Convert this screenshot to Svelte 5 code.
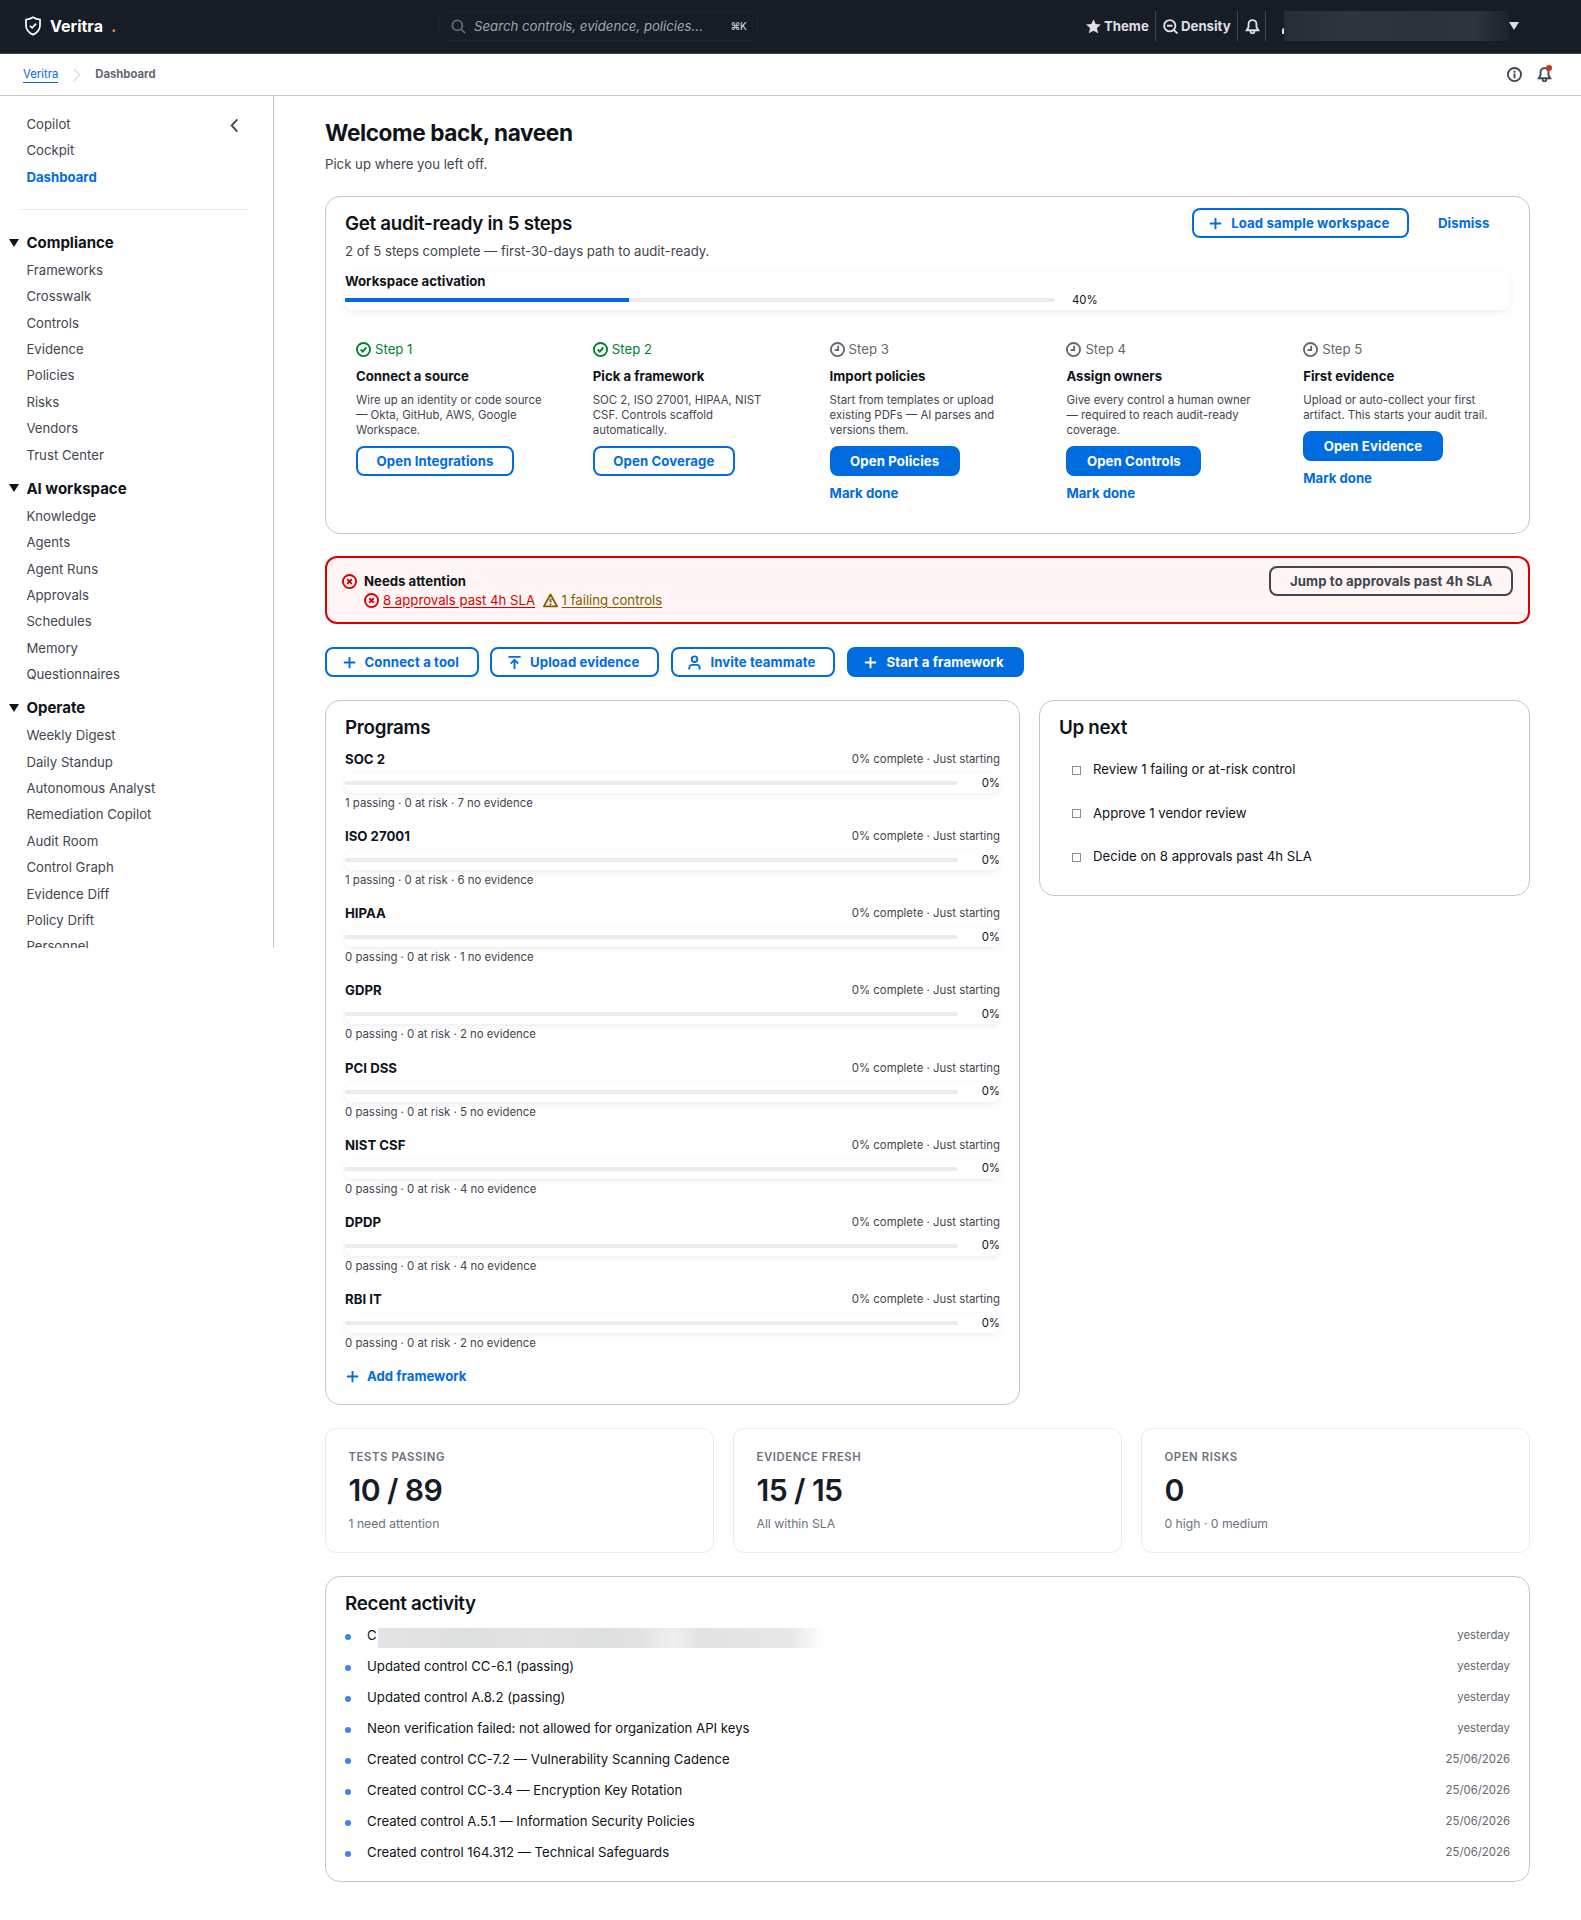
<script lang="ts">
	type Step = {
		title: string;
		text: string;
		action: string;
		done: boolean;
	};

	const topLinks = ['Copilot', 'Cockpit', 'Dashboard'];

	const sections = [
		{
			title: 'Compliance',
			items: ['Frameworks', 'Crosswalk', 'Controls', 'Evidence', 'Policies', 'Risks', 'Vendors', 'Trust Center']
		},
		{
			title: 'AI workspace',
			items: ['Knowledge', 'Agents', 'Agent Runs', 'Approvals', 'Schedules', 'Memory', 'Questionnaires']
		},
		{
			title: 'Operate',
			items: [
				'Weekly Digest',
				'Daily Standup',
				'Autonomous Analyst',
				'Remediation Copilot',
				'Audit Room',
				'Control Graph',
				'Evidence Diff',
				'Policy Drift',
				'Personnel'
			]
		}
	];

	const steps: Step[] = [
		{
			title: 'Connect a source',
			text: 'Wire up an identity or code source — Okta, GitHub, AWS, Google Workspace.',
			action: 'Open Integrations',
			done: true
		},
		{
			title: 'Pick a framework',
			text: 'SOC 2, ISO 27001, HIPAA, NIST CSF. Controls scaffold automatically.',
			action: 'Open Coverage',
			done: true
		},
		{
			title: 'Import policies',
			text: 'Start from templates or upload existing PDFs — AI parses and versions them.',
			action: 'Open Policies',
			done: false
		},
		{
			title: 'Assign owners',
			text: 'Give every control a human owner — required to reach audit-ready coverage.',
			action: 'Open Controls',
			done: false
		},
		{
			title: 'First evidence',
			text: 'Upload or auto-collect your first artifact. This starts your audit trail.',
			action: 'Open Evidence',
			done: false
		}
	];

	const programs = [
		{ name: 'SOC 2', passing: 1, missing: 7 },
		{ name: 'ISO 27001', passing: 1, missing: 6 },
		{ name: 'HIPAA', passing: 0, missing: 1 },
		{ name: 'GDPR', passing: 0, missing: 2 },
		{ name: 'PCI DSS', passing: 0, missing: 5 },
		{ name: 'NIST CSF', passing: 0, missing: 4 },
		{ name: 'DPDP', passing: 0, missing: 4 },
		{ name: 'RBI IT', passing: 0, missing: 2 }
	];

	const upNext = ['Review 1 failing or at-risk control', 'Approve 1 vendor review', 'Decide on 8 approvals past 4h SLA'];

	const stats = [
		{ label: 'Tests passing', value: '10 / 89', note: '1 need attention' },
		{ label: 'Evidence fresh', value: '15 / 15', note: 'All within SLA' },
		{ label: 'Open risks', value: '0', note: '0 high · 0 medium' }
	];

	const activity = [
		{ text: 'C', when: 'yesterday', redacted: true },
		{ text: 'Updated control CC-6.1 (passing)', when: 'yesterday' },
		{ text: 'Updated control A.8.2 (passing)', when: 'yesterday' },
		{ text: 'Neon verification failed: not allowed for organization API keys', when: 'yesterday' },
		{ text: 'Created control CC-7.2 — Vulnerability Scanning Cadence', when: '25/06/2026' },
		{ text: 'Created control CC-3.4 — Encryption Key Rotation', when: '25/06/2026' },
		{ text: 'Created control A.5.1 — Information Security Policies', when: '25/06/2026' },
		{ text: 'Created control 164.312 — Technical Safeguards', when: '25/06/2026' }
	];

	const activation = 40;
</script>

{#snippet icon(name: string)}
	<svg class="icon" viewBox="0 0 16 16" aria-hidden="true">
		{#if name === 'plus'}
			<path d="M8 2v12M2 8h12" />
		{:else if name === 'upload'}
			<path d="M1.5 2h13M8 15V6M4 9.2 8 5.2l4 4" />
		{:else if name === 'user'}
			<circle cx="8" cy="4.5" r="3" />
			<path d="M2.5 15.5v-2a3 3 0 0 1 3-3h5a3 3 0 0 1 3 3v2" />
		{:else if name === 'check'}
			<circle cx="8" cy="8" r="7" />
			<path d="m5 8 2.3 2.3L11 5.7" />
		{:else if name === 'pending'}
			<circle cx="8" cy="8" r="7" />
			<path d="M8.7 4v4.5H5" />
		{:else if name === 'error'}
			<circle cx="8" cy="8" r="7" />
			<path d="m5.6 5.6 4.8 4.8m0-4.8-4.8 4.8" />
		{:else if name === 'warning'}
			<path stroke-linejoin="round" d="M8 1.5 15 14.3H1zM8 6v4.2M8 11.2v1.6" />
		{:else if name === 'info'}
			<circle cx="8" cy="8" r="7" />
			<path d="M8 7v5M8 4v2" />
		{:else if name === 'bell'}
			<path d="M8 1.2a4.2 4.2 0 0 0-4.2 4.2v3.1L1.8 12h12.4l-2-3.5V5.4A4.2 4.2 0 0 0 8 1.2zM6 13v.3a2 2 0 0 0 4 0V13" />
		{:else if name === 'search'}
			<circle cx="6.8" cy="6.8" r="5.3" />
			<path d="m10.8 10.8 4.2 4.2" />
		{:else if name === 'zoom-out'}
			<circle cx="7.2" cy="7.2" r="6" />
			<path d="m11.5 11.5 4 4M4.3 7.2h5.8" />
		{:else if name === 'left'}
			<path d="M11 1.5 5 8l6 6.5" />
		{:else if name === 'star'}
			<path class="solid" d="m8 .2 2.3 5 5.6.6-4.200 3.700 1.200 5.700L8 12.400 3.100 15.200l1.200-5.700L.1 5.800l5.600-.6z" />
		{/if}
	</svg>
{/snippet}

<div class="page">
	<header class="topbar">
		<div class="brand">
			<svg class="shield" viewBox="0 0 18 20" aria-hidden="true">
				<path d="M9 1.3c2.4 1.5 4.7 2.1 7 2.2v5.8c0 4.4-2.7 7.5-7 9.3-4.3-1.8-7-4.9-7-9.3V3.5c2.3-.1 4.6-.7 7-2.2z" />
				<path d="m6 9.8 2.2 2.1 3.9-4.3" />
			</svg>
			<span class="brand-name">Veritra</span><span class="brand-dot">.</span>
		</div>
		<div class="search">
			{@render icon('search')}
			<span class="placeholder">Search controls, evidence, policies...</span>
			<kbd>⌘K</kbd>
		</div>
		<div class="utilities">
			<span class="util theme">{@render icon('star')}Theme</span>
			<span class="util density">{@render icon('zoom-out')}Density</span>
			<span class="util alerts">{@render icon('bell')}</span>
			<span class="util account"><i class="avatar-edge"></i><span class="account-mask"></span></span>
			<span class="caret light"></span>
		</div>
	</header>

	<div class="crumbbar">
		<a class="crumb-link" href="#home">Veritra</a>
		<svg class="crumb-sep" viewBox="0 0 8 14" aria-hidden="true"><path d="m1 1 5.5 6L1 13" /></svg>
		<span class="crumb-current">Dashboard</span>
		<span class="crumb-actions">
			{@render icon('info')}
			<span class="bell-wrap">{@render icon('bell')}<i class="badge"></i></span>
		</span>
	</div>

	<div class="body">
		<nav class="sidebar">
			<div class="top-links">
				<span class="collapse">{@render icon('left')}</span>
				{#each topLinks as link}
					<a class="nav-link" class:active={link === 'Dashboard'} href="#nav">{link}</a>
				{/each}
			</div>
			{#each sections as section}
				<div class="section">
					<div class="section-title"><span class="caret"></span>{section.title}</div>
					{#each section.items as item}
						<a class="nav-link" href="#nav">{item}</a>
					{/each}
				</div>
			{/each}
		</nav>

		<main>
			<h1>Welcome back, naveen</h1>
			<p class="lead">Pick up where you left off.</p>

			<section class="card onboarding">
				<div class="card-head">
					<h2>Get audit-ready in 5 steps</h2>
					<div class="head-actions">
						<button class="btn with-icon">{@render icon('plus')}Load sample workspace</button>
						<button class="btn link">Dismiss</button>
					</div>
				</div>
				<p class="card-desc">2 of 5 steps complete — first-30-days path to audit-ready.</p>
				<div class="activation">
					<strong>Workspace activation</strong>
					<div class="meter-row">
						<div class="meter"><div class="fill" style="width: {activation}%"></div></div>
						<span>{activation}%</span>
					</div>
				</div>
				<div class="steps">
					{#each steps as step, i}
						<div class="step">
							<div class="status" class:done={step.done}>
								{@render icon(step.done ? 'check' : 'pending')}Step {i + 1}
							</div>
							<h3>{step.title}</h3>
							<p>{step.text}</p>
							<button class="btn" class:primary={!step.done}>{step.action}</button>
							{#if !step.done}
								<a class="mark" href="#done">Mark done</a>
							{/if}
						</div>
					{/each}
				</div>
			</section>

			<section class="alert">
				<span class="alert-icon">{@render icon('error')}</span>
				<div class="alert-body">
					<strong>Needs attention</strong>
					<div class="alert-links">
						<span class="issue">{@render icon('error')}<a href="#approvals">8 approvals past 4h SLA</a></span>
						<span class="issue warn">{@render icon('warning')}<a href="#controls">1 failing controls</a></span>
					</div>
				</div>
				<button class="btn neutral">Jump to approvals past 4h SLA</button>
			</section>

			<div class="quick-actions">
				<button class="btn with-icon">{@render icon('plus')}Connect a tool</button>
				<button class="btn with-icon">{@render icon('upload')}Upload evidence</button>
				<button class="btn with-icon">{@render icon('user')}Invite teammate</button>
				<button class="btn with-icon primary">{@render icon('plus')}Start a framework</button>
			</div>

			<div class="columns">
				<section class="card programs">
					<h2>Programs</h2>
					{#each programs as program}
						<div class="program">
							<div class="program-head">
								<strong>{program.name}</strong>
								<span>0% complete · Just starting</span>
							</div>
							<div class="program-meter">
								<div class="meter"></div>
								<span>0%</span>
							</div>
							<div class="program-note">{program.passing} passing · 0 at risk · {program.missing} no evidence</div>
						</div>
					{/each}
					<a class="add" href="#add">{@render icon('plus')}Add framework</a>
				</section>

				<section class="card up-next">
					<h2>Up next</h2>
					<ul>
						{#each upNext as task}
							<li><i class="box"></i>{task}</li>
						{/each}
					</ul>
				</section>
			</div>

			<div class="stats">
				{#each stats as stat}
					<div class="stat">
						<div class="stat-label">{stat.label}</div>
						<div class="stat-value">{stat.value}</div>
						<div class="stat-note">{stat.note}</div>
					</div>
				{/each}
			</div>

			<section class="card activity">
				<h2>Recent activity</h2>
				<ul>
					{#each activity as entry}
						<li>
							<i class="dot"></i>
							<span>{entry.text}</span>
							{#if entry.redacted}<i class="redacted"></i>{/if}
							<time>{entry.when}</time>
						</li>
					{/each}
				</ul>
			</section>
		</main>
	</div>
</div>

<style>
	:global(body) {
		background: #ffffff;
	}

	.page {
		height: 1920px;
		overflow: hidden;
		font-family: Inter, 'Liberation Sans', sans-serif;
		font-size: 13.2px;
		line-height: 19px;
		color: #0f141a;
	}

	.page *,
	.page {
		box-sizing: border-box;
	}

	h1,
	h2,
	h3,
	p,
	ul {
		margin: 0;
		padding: 0;
	}

	ul {
		list-style: none;
	}

	a {
		color: inherit;
		text-decoration: none;
	}

	.icon {
		width: 15px;
		height: 15px;
		flex: none;
		fill: none;
		stroke: currentColor;
		stroke-width: 2;
	}

	.icon .solid {
		fill: currentColor;
		stroke: none;
	}

	/* Top navigation */
	.topbar {
		display: flex;
		align-items: center;
		height: 54px;
		padding: 0 62px 1px 24px;
		background: #161d26;
		border-bottom: 1px solid #424650;
		color: #dedee3;
	}

	.brand {
		display: flex;
		align-items: center;
		width: 415px;
		color: #ffffff;
		font-size: 16px;
		font-weight: 700;
	}

	.shield {
		width: 18px;
		height: 20px;
		margin-right: 8px;
		fill: none;
		stroke: #ffffff;
		stroke-width: 1.7;
	}

	.brand-dot {
		margin-left: 8px;
		color: #ff7a1a;
	}

	.search {
		display: flex;
		align-items: center;
		width: 319px;
		height: 30px;
		padding: 0 11px;
		border: 1px solid #1c232d;
		border-radius: 7px;
		color: #a4a4ad;
	}

	.search .icon {
		color: #656871;
	}

	.placeholder {
		margin-left: 8px;
		font-style: italic;
		white-space: nowrap;
	}

	kbd {
		margin-left: auto;
		font: inherit;
		font-size: 10px;
		letter-spacing: -0.6px;
		color: #dedee3;
	}

	.utilities {
		display: flex;
		align-items: center;
		margin-left: auto;
		font-weight: 700;
	}

	.util {
		display: flex;
		align-items: center;
		height: 30px;
		gap: 3px;
		border-right: 1px solid #424650;
	}

	.theme {
		width: 70px;
	}

	.density {
		width: 82px;
		padding-left: 7px;
	}

	.alerts {
		width: 28px;
		padding-left: 7px;
	}

	.account {
		width: 243px;
		gap: 0;
		padding-left: 16px;
		border: none;
	}

	.avatar-edge {
		width: 2px;
		height: 6px;
		margin-top: 10px;
		border-left: 2px solid #dedee3;
		border-top-left-radius: 3px;
	}

	.account-mask {
		width: 225px;
		height: 30px;
		background: linear-gradient(90deg, #262d36, #2f343e 30%, #2c323c 60%, #2e333e 85%, #1c232c);
	}

	.caret {
		border: 5px solid transparent;
		border-top: 8px solid #0f141a;
		border-bottom: none;
	}

	.caret.light {
		border-top-color: #dedee3;
	}

	/* Breadcrumbs */
	.crumbbar {
		display: flex;
		align-items: center;
		height: 42px;
		padding: 0 29px 0 23px;
		border-bottom: 1px solid #c6c6cd;
		font-size: 11.3px;
	}

	.crumb-link {
		color: #006ce0;
		line-height: 15px;
		border-bottom: 1px solid #006ce0;
	}

	.crumb-sep {
		width: 8px;
		height: 14px;
		margin: 0 14px 0 15px;
		fill: none;
		stroke: #dedee3;
		stroke-width: 1.5;
	}

	.crumb-current {
		color: #656871;
		font-weight: 700;
	}

	.crumb-actions {
		display: flex;
		gap: 15px;
		margin-left: auto;
		color: #424650;
	}

	.bell-wrap {
		position: relative;
		display: flex;
	}

	.badge {
		position: absolute;
		top: -2px;
		right: 0;
		width: 6px;
		height: 6px;
		border-radius: 50%;
		background: #d13212;
	}

	.body {
		display: flex;
		align-items: flex-start;
	}

	/* Side navigation */
	.sidebar {
		width: 274px;
		height: 852px;
		overflow: hidden;
		border-right: 1px solid #c6c6cd;
		color: #424650;
		flex: none;
	}

	.top-links {
		position: relative;
		height: 114px;
		margin: 0 25px 0 19px;
		padding: 15px 0 0 7.4px;
		border-bottom: 1px solid #ebebf0;
	}

	.top-links .nav-link {
		padding-left: 0;
	}

	.collapse {
		position: absolute;
		top: 22px;
		right: 6px;
	}

	.nav-link {
		display: block;
		height: 26.36px;
		padding-left: 26.4px;
		line-height: 26.36px;
	}

	.nav-link.active {
		color: #006ce0;
		font-weight: 700;
	}

	.section {
		padding-top: 6px;
	}

	.top-links + .section {
		padding-top: 18px;
	}

	.section-title {
		display: flex;
		align-items: center;
		height: 29px;
		gap: 7.4px;
		padding-left: 9px;
		color: #0f141a;
		font-size: 15px;
		font-weight: 700;
	}

	/* Main content */
	main {
		width: 1205px;
		margin-left: 51px;
	}

	h1 {
		margin-top: 22px;
		font-size: 22.6px;
		line-height: 30px;
		letter-spacing: -0.4px;
	}

	.lead {
		margin-top: 7px;
		color: #424650;
	}

	h2 {
		padding-top: 1px;
		font-size: 18.8px;
		line-height: 22px;
		font-weight: 600;
		letter-spacing: -0.3px;
	}

	.card {
		border: 1px solid #c6c6cd;
		border-radius: 15px;
		padding: 15px 19px;
	}

	.btn {
		display: inline-flex;
		align-items: center;
		justify-content: center;
		height: 30px;
		padding: 0 18.5px;
		border: 2px solid #006ce0;
		border-radius: 8px;
		background: #ffffff;
		color: #006ce0;
		font: 700 13.2px/19px Inter, sans-serif;
		letter-spacing: 0.1px;
		white-space: nowrap;
		gap: 8px;
	}

	.btn.with-icon {
		padding: 0 18px 0 14.5px;
	}

	.btn.primary {
		background: #006ce0;
		color: #ffffff;
	}

	.btn.neutral {
		border-color: #424650;
		background: transparent;
		color: #424650;
	}

	.btn.link {
		border-color: transparent;
		background: none;
	}

	.onboarding {
		height: 338px;
		margin-top: 22px;
		padding-top: 11px;
	}

	.card-head {
		display: flex;
		align-items: center;
		justify-content: space-between;
		height: 30px;
	}

	.head-actions {
		display: flex;
		gap: 8px;
	}

	.card-desc {
		margin-top: 4px;
		color: #424650;
		line-height: 19px;
	}

	.activation {
		height: 39px;
		margin-top: 10px;
		border-radius: 8px;
		box-shadow: 0 2px 6px rgba(0, 7, 22, 0.07);
	}

	.activation strong {
		display: block;
		height: 19px;
		line-height: 21px;
	}

	.meter-row {
		display: flex;
		align-items: center;
		height: 20px;
		gap: 17px;
		font-size: 11.4px;
	}

	.meter-row span {
		margin-top: 1px;
	}

	.meter {
		height: 4px;
		background: #ebebf0;
		border-radius: 2px;
	}

	.meter-row .meter {
		width: 710px;
	}

	.fill {
		height: 4px;
		background: #006ce0;
	}

	.steps {
		display: grid;
		grid-template-columns: repeat(5, 1fr);
		margin: 30px -19px 0 0;
	}

	.step {
		padding: 0 36px 0 11px;
	}

	.status {
		display: flex;
		align-items: center;
		height: 19px;
		gap: 4px;
		color: #656871;
	}

	.status.done {
		color: #00802f;
	}

	.step h3 {
		margin-top: 8px;
		font-size: 13.2px;
		line-height: 19px;
	}

	.step p {
		margin: 7px 0 8px;
		color: #424650;
		font-size: 11.4px;
		line-height: 15.1px;
	}

	.mark {
		display: block;
		margin-top: 8px;
		color: #006ce0;
		font-weight: 700;
	}

	/* Alert */
	.alert {
		display: flex;
		height: 68px;
		margin-top: 22px;
		padding: 8px 15px;
		border: 2px solid #db0000;
		border-radius: 12px;
		background: #fff5f5;
	}

	.alert-icon {
		display: flex;
		margin: 8px 7px 0 0;
		color: #db0000;
		height: 15px;
	}

	.alert-body {
		flex: 1;
		padding-top: 6px;
	}

	.alert-links {
		display: flex;
		gap: 7.5px;
	}

	.issue {
		display: flex;
		align-items: center;
		gap: 4px;
		color: #db0000;
	}

	.issue.warn {
		color: #855900;
	}

	.issue a {
		text-decoration: underline;
		text-underline-offset: 2px;
	}

	.quick-actions {
		display: flex;
		gap: 11.5px;
		margin-top: 23px;
	}

	/* Programs and tasks */
	.columns {
		display: flex;
		align-items: flex-start;
		gap: 19px;
		margin-top: 23px;
	}

	.programs {
		width: 695px;
		height: 705px;
	}

	.programs h2 {
		margin-bottom: -1px;
	}

	.program {
		height: 77.17px;
		padding-top: 12px;
		font-size: 11.4px;
	}

	.program-head {
		display: flex;
		align-items: center;
		justify-content: space-between;
		height: 19px;
		color: #424650;
	}

	.program-head strong {
		color: #0f141a;
		font-size: 13.2px;
	}

	.program-meter {
		display: flex;
		align-items: center;
		justify-content: space-between;
		height: 20px;
		margin-top: 4px;
		border-radius: 8px;
		box-shadow: 0 2px 6px rgba(0, 7, 22, 0.07);
	}

	.program-meter .meter {
		width: 613px;
	}

	.program-note {
		color: #424650;
		line-height: 20px;
	}

	.add {
		display: flex;
		align-items: center;
		height: 30px;
		margin-top: 6px;
		gap: 7px;
		color: #006ce0;
		font-weight: 700;
	}

	.up-next {
		width: 491px;
		height: 196px;
	}

	.up-next ul {
		margin: 9px 0 0 13px;
	}

	.up-next li {
		display: flex;
		align-items: center;
		height: 43.5px;
	}

	.box {
		width: 9px;
		height: 9px;
		margin: 1px 12px 0 0;
		border: 1px solid #8c8c94;
	}

	/* Stats */
	.stats {
		display: grid;
		grid-template-columns: repeat(3, 1fr);
		gap: 19px;
		margin-top: 23px;
	}

	.stat {
		height: 125px;
		padding: 19px 22.5px;
		border: 1px solid #ebebf0;
		border-radius: 11px;
		color: #6b7280;
	}

	.stat-label {
		font-size: 11.3px;
		line-height: 18px;
		font-weight: 600;
		letter-spacing: 0.6px;
		text-transform: uppercase;
	}

	.stat-value {
		color: #161d26;
		font-size: 30.2px;
		line-height: 49px;
		font-weight: 600;
		letter-spacing: -0.6px;
	}

	.stat-note {
		font-size: 12.2px;
		line-height: 17px;
	}

	/* Activity */
	.activity {
		height: 306px;
		margin-top: 23px;
	}

	.activity ul {
		margin-top: 5px;
	}

	.activity li {
		display: flex;
		align-items: center;
		height: 31.07px;
	}

	.dot {
		width: 6px;
		height: 6px;
		margin: 3px 16px 0 0;
		border-radius: 50%;
		background: #3b82f6;
	}

	.redacted {
		width: 448px;
		height: 20px;
		margin: 5px 0 0 1px;
		background: linear-gradient(90deg, #e4e4e5, #dedfdf 20%, #e3e3e4 35%, #dedfdf 50%, #e2e2e3 58%, #efefef 66%, #e3e3e4 72%, #e8e8e9 92%, #ffffff);
	}

	.activity time {
		margin-left: auto;
		color: #656871;
		font-size: 11.4px;
	}
</style>
